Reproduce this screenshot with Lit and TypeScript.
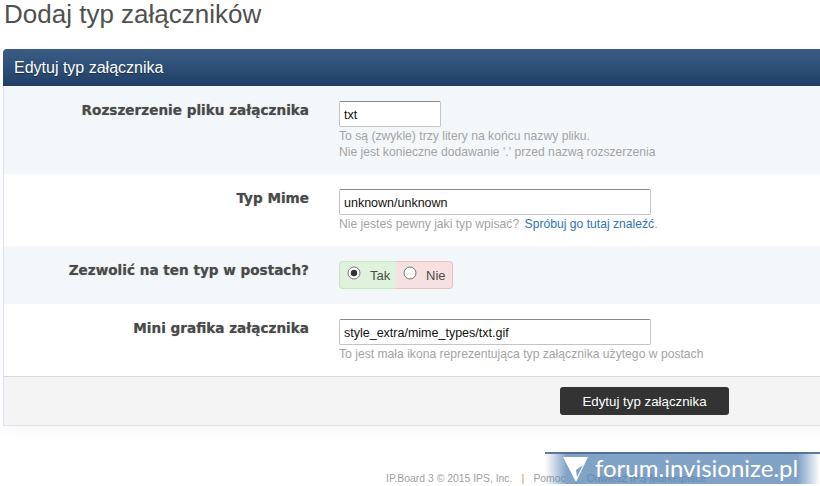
import { LitElement, html, css, svg } from 'lit';
import { customElement } from 'lit/decorators.js';

@customElement('app-root')
export class AppRoot extends LitElement {
  static styles = css`
    :host {
      display: block;
      position: relative;
      width: 820px;
      height: 486px;
      overflow: hidden;
      background: #fff;
      font-family: 'Liberation Sans', Arial, sans-serif;
      color: #4c4c4c;
    }

    h1 {
      margin: 0;
      padding: 0 0 0 4px;
      height: 49px;
      font-size: 26px;
      line-height: 28px;
      font-weight: 400;
      color: #505050;
    }

    .panel {
      width: 1000px;
      margin-left: 3px;
      border-left: 1px solid #dbe4ef;
      border-bottom: 1px solid #dbe4ef;
      border-radius: 4px 0 0 0;
      box-shadow: 0 4px 14px rgba(0, 0, 0, 0.04);
    }

    .panel-head {
      height: 37px;
      margin-left: -1px;
      padding-left: 11px;
      display: flex;
      align-items: center;
      border-radius: 4px 0 0 0;
      background: linear-gradient(#3b5d85, #1f3f66);
      color: #fff;
      font-size: 16px;
      text-shadow: 0 1px 1px rgba(0, 0, 0, 0.4);
    }

    .row {
      display: flex;
      box-sizing: border-box;
    }

    .row.alt {
      background: #f4f7fa;
    }

    .label {
      width: 305px;
      flex: none;
      margin-top: 1px;
      text-align: right;
      font-family: 'DejaVu Sans', Verdana, sans-serif;
      font-weight: 700;
      font-size: 13.6px;
      line-height: 16px;
      color: #4a4a4a;
      text-shadow: 0 0 1px rgba(74, 74, 74, 0.5);
    }

    .field {
      margin-left: 30px;
      display: flex;
      flex-direction: column;
      align-items: flex-start;
    }

    .input {
      box-sizing: border-box;
      height: 26px;
      padding: 1px 4px 0;
      display: flex;
      align-items: center;
      background: #fff;
      border: 1px solid #c4c4c4;
      border-top-color: #8a8a8a;
      border-radius: 2px;
      font-size: 12.5px;
      color: #111;
    }

    .hint {
      margin-top: 1px;
      font-size: 12.15px;
      line-height: 16px;
      color: #a4a4a4;
    }

    .hint a {
      margin-left: 2px;
      color: #2f74b5;
      text-decoration: none;
    }

    .r1 { height: 88px; padding-top: 15px; }
    .r2 { height: 72px; padding-top: 15px; }
    .r3 { height: 58px; padding-top: 15px; }
    .r4 { height: 72px; padding-top: 15px; }
    .r1 .input { width: 102px; }
    .r2 .input, .r4 .input { width: 312px; }

    .yesno {
      display: flex;
      height: 28px;
      font-size: 13px;
      color: #4c4c4c;
    }

    .yes, .no {
      display: flex;
      align-items: center;
      box-sizing: border-box;
      height: 28px;
    }

    .yes svg, .no svg {
      margin-bottom: 4px;
    }

    .yes {
      width: 57px;
      padding-left: 7px;
      gap: 9px;
      background: #dff3dc;
      border: 1px solid #c6e6c3;
      border-right: 0;
      border-radius: 4px 0 0 4px;
    }

    .no {
      width: 57px;
      padding-left: 7px;
      gap: 9px;
      background: #f6e0e0;
      border: 1px solid #ecc0c0;
      border-left: 0;
      border-radius: 0 4px 4px 0;
    }

    .foot {
      height: 49px;
      box-sizing: border-box;
      padding: 10px 0 0 556px;
      background: #f4f4f4;
      border-top: 1px solid #d8d8d8;
    }

    .btn {
      width: 169px;
      height: 28px;
      display: flex;
      align-items: center;
      justify-content: center;
      background: #333;
      border-radius: 3px;
      color: #fff;
      font-size: 13.3px;
    }

    .copy {
      padding: 46px 0 0 386px;
      display: flex;
      gap: 9px;
      font-size: 10.4px;
      line-height: 14px;
      color: #a0a0a0;
      white-space: nowrap;
    }

    .copy b {
      font-weight: 700;
      color: #e0b98c;
    }

    .mark {
      position: absolute;
      left: 545px;
      top: 452px;
      width: 275px;
      height: 32px;
      display: flex;
      align-items: center;
      padding-left: 18px;
      box-sizing: border-box;
      gap: 7px;
      background: linear-gradient(90deg, rgba(85, 130, 180, 0), rgba(85, 130, 180, 0.74) 8%, rgba(85, 130, 180, 0.74) 92%, rgba(85, 130, 180, 0));
      border-top: 2px solid rgba(70, 105, 145, 0.85);
      color: #fff;
      font-family: Lato, 'Open Sans', sans-serif;
      font-size: 24px;
      white-space: nowrap;
    }

    .mark span {
      margin-bottom: 3px;
    }
  `;

  radio(on: boolean) {
    return html`<svg width="14" height="14" viewBox="0 0 14 14">
      <circle cx="7" cy="7" r="6" fill="#fff" stroke="#777"></circle>
      ${on ? svg`<circle cx="7" cy="7" r="3.2" fill="#333"></circle>` : ''}
    </svg>`;
  }

  render() {
    return html`
      <h1>Dodaj typ załączników</h1>
      <div class="panel">
        <div class="panel-head">Edytuj typ załącznika</div>
        <div class="row alt r1">
          <div class="label">Rozszerzenie pliku załącznika</div>
          <div class="field">
            <div class="input">txt</div>
            <div class="hint">To są (zwykle) trzy litery na końcu nazwy pliku.<br />Nie jest konieczne dodawanie '.' przed nazwą rozszerzenia</div>
          </div>
        </div>
        <div class="row r2">
          <div class="label">Typ Mime</div>
          <div class="field">
            <div class="input">unknown/unknown</div>
            <div class="hint">Nie jesteś pewny jaki typ wpisać? <a href="#">Spróbuj go tutaj znaleźć</a>.</div>
          </div>
        </div>
        <div class="row alt r3">
          <div class="label">Zezwolić na ten typ w postach?</div>
          <div class="field">
            <div class="yesno">
              <div class="yes">${this.radio(true)}<span>Tak</span></div>
              <div class="no">${this.radio(false)}<span>Nie</span></div>
            </div>
          </div>
        </div>
        <div class="row r4">
          <div class="label">Mini grafika załącznika</div>
          <div class="field">
            <div class="input">style_extra/mime_types/txt.gif</div>
            <div class="hint">To jest mała ikona reprezentująca typ załącznika użytego w postach</div>
          </div>
        </div>
        <div class="foot"><div class="btn">Edytuj typ załącznika</div></div>
      </div>
      <div class="copy">
        <span>IP.Board 3 © 2015 IPS, Inc.</span><b>|</b><span>Pomoc</span><b>|</b><span>Odwiedź IPS Marketplace</span>
      </div>
      <div class="mark">
        <svg width="25" height="25" viewBox="0 0 25 25">
          <path d="M0 0H25L13 25Z" fill="#fff"></path>
          <path d="M13 13 20 8 14 20Z" fill="#7fa1c8"></path>
        </svg>
        <span>forum.invisionize.pl</span>
      </div>
    `;
  }
}
